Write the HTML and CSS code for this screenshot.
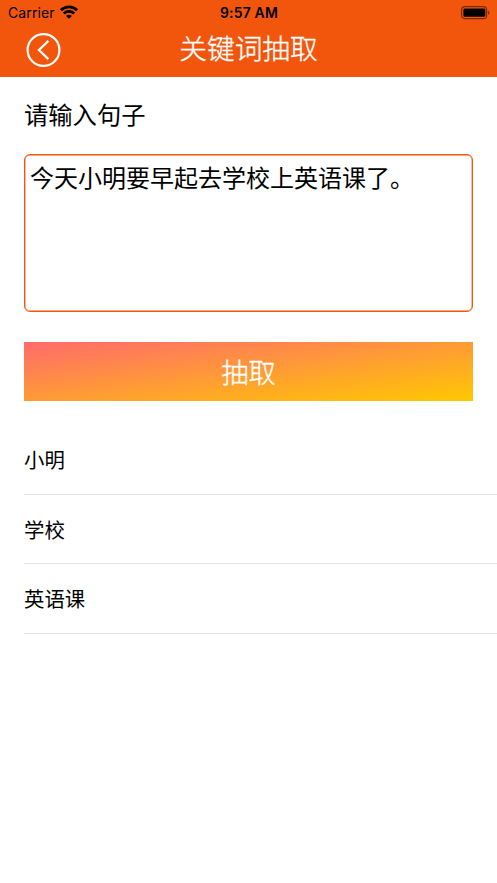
FILE: index.html
```html
<!DOCTYPE html>
<html lang="zh-CN">
<head>
<meta charset="utf-8">
<title>关键词抽取</title>
<link rel="stylesheet" href="styles.css">
</head>
<body>
<header class="header">
  <div class="status">
    <div class="carrier">
      <span>Carrier</span>
      <svg class="wifi" width="18" height="14" viewBox="0 0 18 14" fill="none" stroke="#000" stroke-width="2.8">
        <path d="M.9 5.2C5.4.8 12.6.8 17.1 5.2"/>
        <path d="M3.8 8.4c2.9-2.7 7.5-2.7 10.4 0"/>
        <path d="M9 13.7 6.1 10.9c1.7-1.4 4.1-1.4 5.8 0z" fill="#000" stroke="none"/>
      </svg>
    </div>
    <span class="time">9:57 AM</span>
    <svg class="battery" width="30" height="14" viewBox="0 0 30 14">
      <rect x="1.6" y=".6" width="25" height="12" rx="3.2" fill="none" stroke="#000" stroke-opacity=".5" stroke-width="1.2"/>
      <rect x="3.4" y="2.4" width="21.9" height="8.4" rx="1.4"/>
      <path d="M28.2 4.5c1.8.7 1.8 3.7 0 4.4z" fill-opacity=".5"/>
    </svg>
  </div>
  <div class="nav">
    <svg class="back" width="36" height="36" viewBox="0 0 36 36" fill="none" stroke="#fff" stroke-width="2.2">
      <circle cx="17.5" cy="18" r="15.9"/>
      <path d="M22.4 8.9 12.9 18l9.5 9.1"/>
    </svg>
    <h1 class="title">关键词抽取</h1>
  </div>
</header>
<main class="content">
  <label class="label" for="sentence">请输入句子</label>
  <textarea class="input" id="sentence" spellcheck="false">今天小明要早起去学校上英语课了。</textarea>
  <button class="extract" type="button">抽取</button>
</main>
<ul class="results">
  <li>小明</li>
  <li>学校</li>
  <li>英语课</li>
</ul>
</body>
</html>
```
FILE: styles.css
```css
* { box-sizing: border-box; }
body {
  margin: 0;
  background: #fff;
  color: #000;
  font-family: Inter, "Noto Sans CJK SC", sans-serif;
}
.header { height: 77px; background: #f2560d; }
.status {
  height: 26px;
  padding: 0 7px 0 8px;
  display: grid;
  grid-template-columns: 1fr auto 1fr;
  align-items: center;
  font-size: 14px;
  line-height: 26px;
}
.carrier { display: flex; align-items: center; gap: 5px; letter-spacing: .1px; }
.wifi { margin-top: -2px; }
.time { font-weight: 600; letter-spacing: .15px; }
.battery { justify-self: end; }
.nav {
  height: 48px;
  padding: 0 26px;
  display: grid;
  grid-template-columns: 36px 1fr 36px;
  align-items: center;
}
.title {
  margin: -6px 0 0;
  text-align: center;
  color: #fff;
  font-family: "Noto Sans CJK SC", sans-serif;
  font-size: 27.7px;
  font-weight: 300;
  line-height: 44px;
  -webkit-text-stroke: .35px #fff;
}
.content {
  padding: 19px 24px 0;
  display: flex;
  flex-direction: column;
}
.label { font-family: "Noto Sans CJK SC", sans-serif; font-size: 24.3px; line-height: 36px; }
.input {
  height: 158px;
  margin: 22px 0 0;
  padding: 4px 5px;
  border: 1px solid #f2560d;
  border-radius: 6px;
  box-shadow: inset 0 0 0 .4px #f2560d;
  outline: 0;
  resize: none;
  overflow: hidden;
  color: #000;
  background: #fff;
  font-family: "Noto Sans CJK SC", sans-serif;
  font-size: 24px;
  line-height: 36px;
}
.extract {
  height: 59px;
  margin: 30px 0 0;
  padding: 0 0 2px;
  border: 0;
  color: #fff;
  background: linear-gradient(to bottom right, #ff6b6b, #ff9a36 50%, #ffc800);
  font-family: "Noto Sans CJK SC", sans-serif;
  font-size: 27.3px;
  font-weight: 300;
  -webkit-text-stroke: .35px #fff;
}
.results {
  list-style: none;
  margin: 24px 0 0 24px;
  padding: 0;
  font-family: "Noto Sans CJK SC", sans-serif;
  font-size: 20.4px;
}
.results li {
  height: 69.6px;
  display: flex;
  align-items: center;
  border-bottom: 1px solid #e2e2e2;
}
```
